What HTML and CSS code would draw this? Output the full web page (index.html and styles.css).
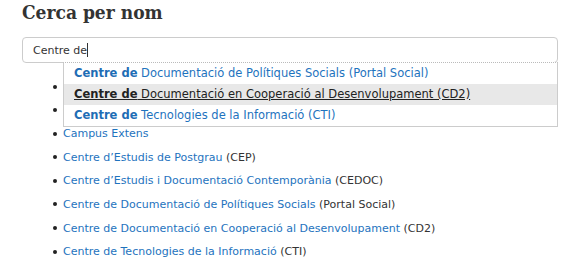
FILE: index.html
```html
<!DOCTYPE html>
<html lang="ca">
<head>
<meta charset="utf-8">
<title>Cerca per nom</title>
<link rel="stylesheet" href="styles.css">
</head>
<body>
<div class="page">
  <h1 class="title">Cerca per nom</h1>
  <div class="search">
    <div class="search-input"><span class="typed">Centre de</span><span class="caret"></span></div>
    <ul class="suggest">
      <li class="suggest-item"><b>Centre de</b> Documentació de Polítiques Socials (Portal Social)</li>
      <li class="suggest-item active"><b>Centre de</b> Documentació en Cooperació al Desenvolupament (CD2)</li>
      <li class="suggest-item"><b>Centre de</b> Tecnologies de la Informació (CTI)</li>
    </ul>
  </div>
  <ul class="results">
    <li class="result"><a class="link">Biblioteca</a></li>
    <li class="result"><a class="link">Campus Digital</a></li>
    <li class="result"><a class="link">Campus Extens</a></li>
    <li class="result"><a class="link">Centre d’Estudis de Postgrau</a> (CEP)</li>
    <li class="result"><a class="link">Centre d’Estudis i Documentació Contemporània</a> (CEDOC)</li>
    <li class="result"><a class="link">Centre de Documentació de Polítiques Socials</a> (Portal Social)</li>
    <li class="result"><a class="link">Centre de Documentació en Cooperació al Desenvolupament</a> (CD2)</li>
    <li class="result"><a class="link">Centre de Tecnologies de la Informació</a> (CTI)</li>
  </ul>
</div>
</body>
</html>
```
FILE: styles.css
```css
html, body {
  margin: 0;
  padding: 0;
  background: #fff;
}
.page {
  padding: 0 20px 0 22px;
  font-family: "DejaVu Sans", Verdana, sans-serif;
  color: #333;
}
.title {
  margin: 0;
  padding-top: 1px;
  font-family: "DejaVu Serif", Georgia, serif;
  font-stretch: condensed;
  font-weight: bold;
  font-size: 19px;
  line-height: 22px;
  color: #333;
}
.search {
  position: relative;
  margin-top: 14px;
}
.search-input {
  box-sizing: border-box;
  height: 26px;
  border: 1px solid #ccc;
  border-radius: 4px;
  padding: 0 10px;
  display: flex;
  align-items: center;
  font-size: 11px;
  color: #333;
}
.caret {
  display: inline-block;
  width: 1px;
  height: 14px;
  background: #333;
}
.suggest {
  position: absolute;
  left: 41px;
  right: 0;
  top: 25px;
  margin: 0;
  padding: 0;
  list-style: none;
  background: #fff;
  border: 1px solid #ccc;
  border-top: 1px dotted #bbb;
  z-index: 2;
}
.suggest-item {
  height: 21px;
  line-height: 21px;
  padding-left: 10px;
  font-size: 11.5px;
  color: #1e73be;
  white-space: nowrap;
}
.suggest-item b {
  color: #1e6db5;
}
.suggest-item.active {
  background: #e8e8e8;
  color: #222;
  text-decoration: underline;
}
.suggest-item.active b {
  color: #222;
}
.results {
  margin: 16px 0 0;
  padding: 0 0 0 41px;
  list-style: none;
}
.result {
  display: flex;
  align-items: center;
  height: 15px;
  margin-bottom: 8.6px;
  font-size: 11px;
  color: #333;
  white-space: pre;
}
.result::before {
  content: "";
  width: 4px;
  height: 4px;
  border-radius: 50%;
  background: #222;
  margin-left: -10px;
  margin-right: 6px;
}
.link {
  color: #1e73be;
  text-decoration: none;
}
```
